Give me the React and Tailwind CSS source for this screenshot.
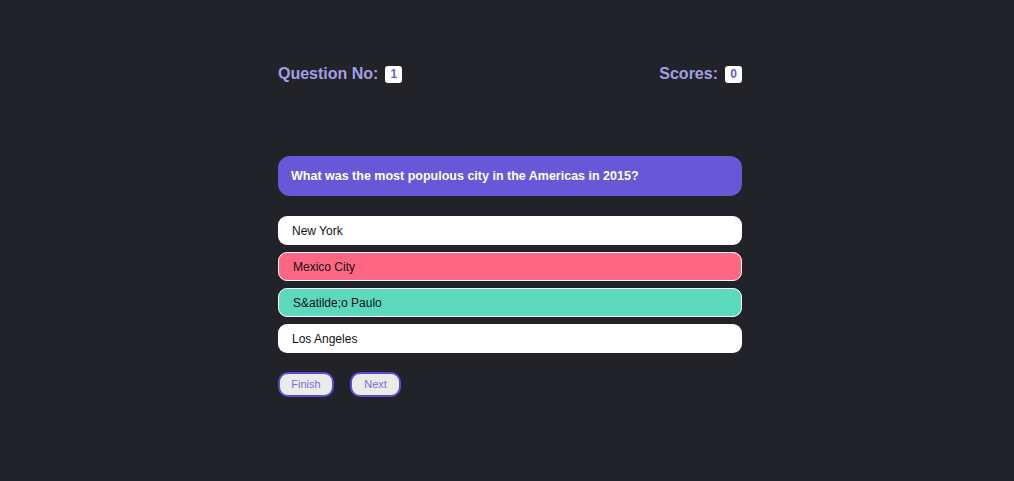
import React from 'react';

const answers = [
  { text: 'New York', cls: 'bg-white' },
  { text: 'Mexico City', cls: 'bg-[#ff6682] border border-white' },
  { text: 'S&atilde;o Paulo', cls: 'bg-[#5cd8bd] border border-white' },
  { text: 'Los Angeles', cls: 'bg-white' },
];

export default function App() {
  return (
    <div className="min-h-[481px] w-full bg-[#212328] pl-[6px] font-['Liberation_Sans',Arial,sans-serif]">
      <div className="mx-auto w-[464px] pt-[62px]">
        {/* Header */}
        <div className="flex items-center justify-between">
          <div className="flex items-center gap-[7px]">
            <span className="text-[16px] font-bold text-[#a39de3]">Question No:</span>
            <span className="flex h-[17px] w-[17px] items-center justify-center rounded-[3px] bg-white text-[12px] font-bold text-[#6a5ad8]">1</span>
          </div>
          <div className="flex items-center gap-[7px]">
            <span className="text-[16px] font-bold text-[#a39de3]">Scores:</span>
            <span className="flex h-[17px] w-[17px] items-center justify-center rounded-[3px] bg-white text-[12px] font-bold text-[#6a5ad8]">0</span>
          </div>
        </div>

        {/* Question */}
        <div className="mt-[70px] flex h-[40px] items-center rounded-[12px] bg-[#6858d8] px-[13px]">
          <p className="text-[12.5px] font-bold text-white">What was the most populous city in the Americas in 2015?</p>
        </div>

        {/* Answers */}
        <div className="mt-[20px] flex flex-col gap-[7px]">
          {answers.map((a) => (
            <div
              key={a.text}
              className={`flex h-[29px] items-center rounded-[9px] px-[14px] text-[12px] text-[#111] ${a.cls}`}
            >
              {a.text}
            </div>
          ))}
        </div>

        {/* Buttons */}
        <div className="mt-[19px] flex gap-[16px]">
          <button className="h-[25px] w-[56px] rounded-[10px] border-2 border-[#5b4bd4] bg-[#ecebec] text-[11px] text-[#7a6ed9]">Finish</button>
          <button className="h-[25px] w-[51px] rounded-[10px] border-2 border-[#5b4bd4] bg-[#ecebec] text-[11px] text-[#7a6ed9]">Next</button>
        </div>
      </div>
    </div>
  );
}
